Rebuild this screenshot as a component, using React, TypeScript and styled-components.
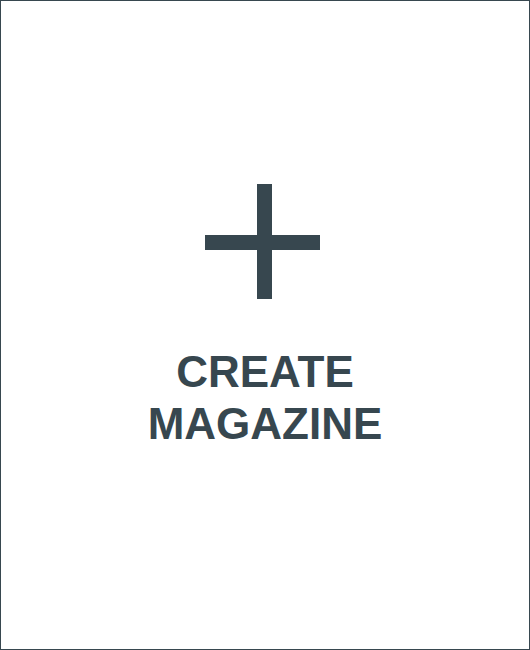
import React from "react";
import styled, { createGlobalStyle } from "styled-components";

const Global = createGlobalStyle`
  html, body { margin: 0; padding: 0; background: #ffffff; }
  * { box-sizing: border-box; }
`;

const Card = styled.div`
  width: 530px;
  height: 650px;
  border: 1px solid #37474f;
  background: #ffffff;
  display: flex;
  flex-direction: column;
  align-items: center;
  padding-top: 183px;
  cursor: pointer;
`;

const PlusIcon = styled.div`
  position: relative;
  width: 115px;
  height: 115px;
  margin-left: -5px;
  &::before, &::after {
    content: "";
    position: absolute;
    background: #37474f;
  }
  &::before {
    left: 0;
    right: 0;
    top: 51px;
    height: 15px;
  }
  &::after {
    top: 0;
    bottom: 0;
    left: 52px;
    width: 15px;
  }
`;

const Label = styled.div`
  margin-top: 47px;
  font-family: "Liberation Sans", Arial, Helvetica, sans-serif;
  font-weight: 700;
  font-size: 44px;
  line-height: 52px;
  color: #37474f;
  text-align: center;
  text-transform: uppercase;
`;

export default function App() {
  return (
    <>
      <Global />
      <Card>
        <PlusIcon />
        <Label>
          Create
          <br />
          Magazine
        </Label>
      </Card>
    </>
  );
}
